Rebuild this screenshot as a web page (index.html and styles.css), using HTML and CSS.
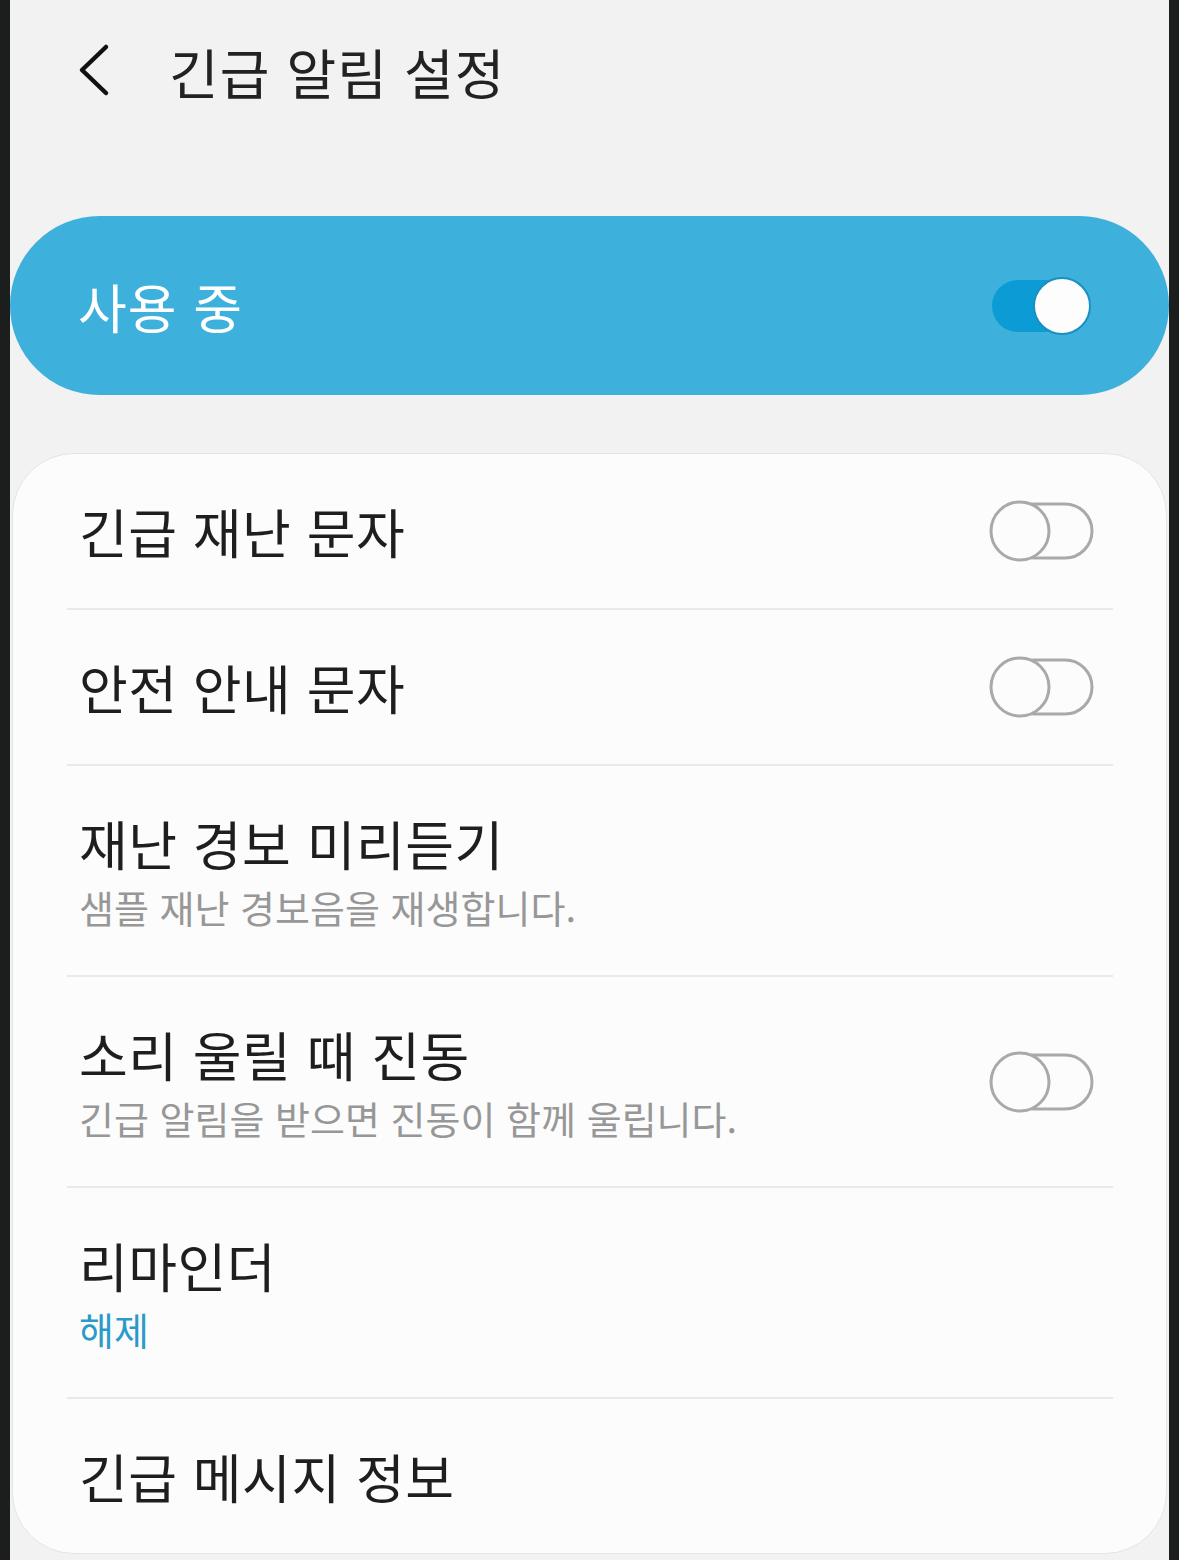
FILE: index.html
```html
<!DOCTYPE html>
<html lang="ko">
<head>
    <meta charset="UTF-8">
    <meta name="viewport" content="width=device-width, initial-scale=1.0">
    <title>긴급 알림 설정</title>
    <link rel="stylesheet" href="styles.css">
</head>
<body>
    <div class="screen">
        <header class="topbar">
            <button class="back" type="button" aria-label="뒤로">
                <svg width="40" height="56" viewBox="0 0 40 56">
                    <polyline points="30,4 6,27 30,50" fill="none" stroke="#111" stroke-width="4.5" stroke-linecap="round" stroke-linejoin="round"/>
                </svg>
            </button>
            <h1>긴급 알림 설정</h1>
        </header>

        <div class="master">
            <span class="master-label">사용 중</span>
            <svg class="switch" width="108" height="64" viewBox="0 0 108 64">
                <rect x="5" y="6" width="80" height="52" rx="26" fill="#0b9bd5"/>
                <circle cx="75" cy="32" r="28" fill="#fdfdfd" stroke="#1b8fc0" stroke-width="2"/>
            </svg>
        </div>

        <div class="card">
            <div class="row">
                <div class="texts">
                    <div class="title">긴급 재난 문자</div>
                </div>
                <svg class="switch" width="108" height="64" viewBox="0 0 108 64">
                    <rect x="20" y="5" width="85" height="54" rx="27" fill="none" stroke="#a9a9a9" stroke-width="3"/>
                    <circle cx="33" cy="32" r="29" fill="#fcfcfc" stroke="#a9a9a9" stroke-width="3"/>
                </svg>
            </div>
            <div class="row">
                <div class="texts">
                    <div class="title">안전 안내 문자</div>
                </div>
                <svg class="switch" width="108" height="64" viewBox="0 0 108 64">
                    <rect x="20" y="5" width="85" height="54" rx="27" fill="none" stroke="#a9a9a9" stroke-width="3"/>
                    <circle cx="33" cy="32" r="29" fill="#fcfcfc" stroke="#a9a9a9" stroke-width="3"/>
                </svg>
            </div>
            <div class="row tall">
                <div class="texts">
                    <div class="title">재난 경보 미리듣기</div>
                    <div class="sub">샘플 재난 경보음을 재생합니다.</div>
                </div>
            </div>
            <div class="row tall">
                <div class="texts">
                    <div class="title">소리 울릴 때 진동</div>
                    <div class="sub">긴급 알림을 받으면 진동이 함께 울립니다.</div>
                </div>
                <svg class="switch" width="108" height="64" viewBox="0 0 108 64">
                    <rect x="20" y="5" width="85" height="54" rx="27" fill="none" stroke="#a9a9a9" stroke-width="3"/>
                    <circle cx="33" cy="32" r="29" fill="#fcfcfc" stroke="#a9a9a9" stroke-width="3"/>
                </svg>
            </div>
            <div class="row tall">
                <div class="texts">
                    <div class="title">리마인더</div>
                    <div class="sub accent">해제</div>
                </div>
            </div>
            <div class="row last">
                <div class="texts">
                    <div class="title">긴급 메시지 정보</div>
                </div>
            </div>
        </div>
    </div>
</body>
</html>
```

FILE: styles.css
```css
body {
    margin: 0;
    background: #1c1e1d;
    font-family: 'Noto Sans CJK KR', 'Noto Sans', sans-serif;
    color: #1e1e1e;
}
.screen {
    margin: 0 10px;
    min-height: 1560px;
    background: #f2f2f2;
    overflow: hidden;
}
.topbar {
    height: 142px;
    display: flex;
    align-items: center;
}
.back {
    background: none;
    border: none;
    padding: 0;
    margin-left: 66px;
    width: 40px;
    height: 56px;
    cursor: pointer;
}
.back svg {
    display: block;
}
.topbar h1 {
    margin: 0 0 0 53px;
    font-size: 54px;
    font-weight: 400;
    color: #222;
    letter-spacing: 1px;
}
.master {
    margin-top: 74px;
    height: 179px;
    border-radius: 90px;
    background: #3eb0dc;
    display: flex;
    align-items: center;
    justify-content: space-between;
    padding: 0 74px 0 68px;
}
.master-label {
    color: #fff;
    font-size: 53px;
    letter-spacing: 1px;
}
.switch {
    display: block;
    flex-shrink: 0;
}
.card {
    margin: 58px 2px 0 2px;
    background: #fcfcfc;
    border: 1px solid #e4e4e4;
    border-radius: 62px;
    overflow: hidden;
}
.row {
    margin: 0 53px 0 54px;
    height: 156px;
    box-sizing: border-box;
    border-bottom: 2px solid #e9e9e9;
    display: flex;
    align-items: center;
    justify-content: space-between;
    padding: 0 18px 0 12px;
}
.row.tall {
    height: 211px;
}
.row.last {
    height: 154px;
    border-bottom: none;
}
.title {
    font-size: 53px;
    line-height: 60px;
    letter-spacing: 0.5px;
}
.sub {
    margin-top: 12px;
    font-size: 38px;
    line-height: 44px;
    color: #979797;
}
.sub.accent {
    color: #2a9bc8;
}
```
